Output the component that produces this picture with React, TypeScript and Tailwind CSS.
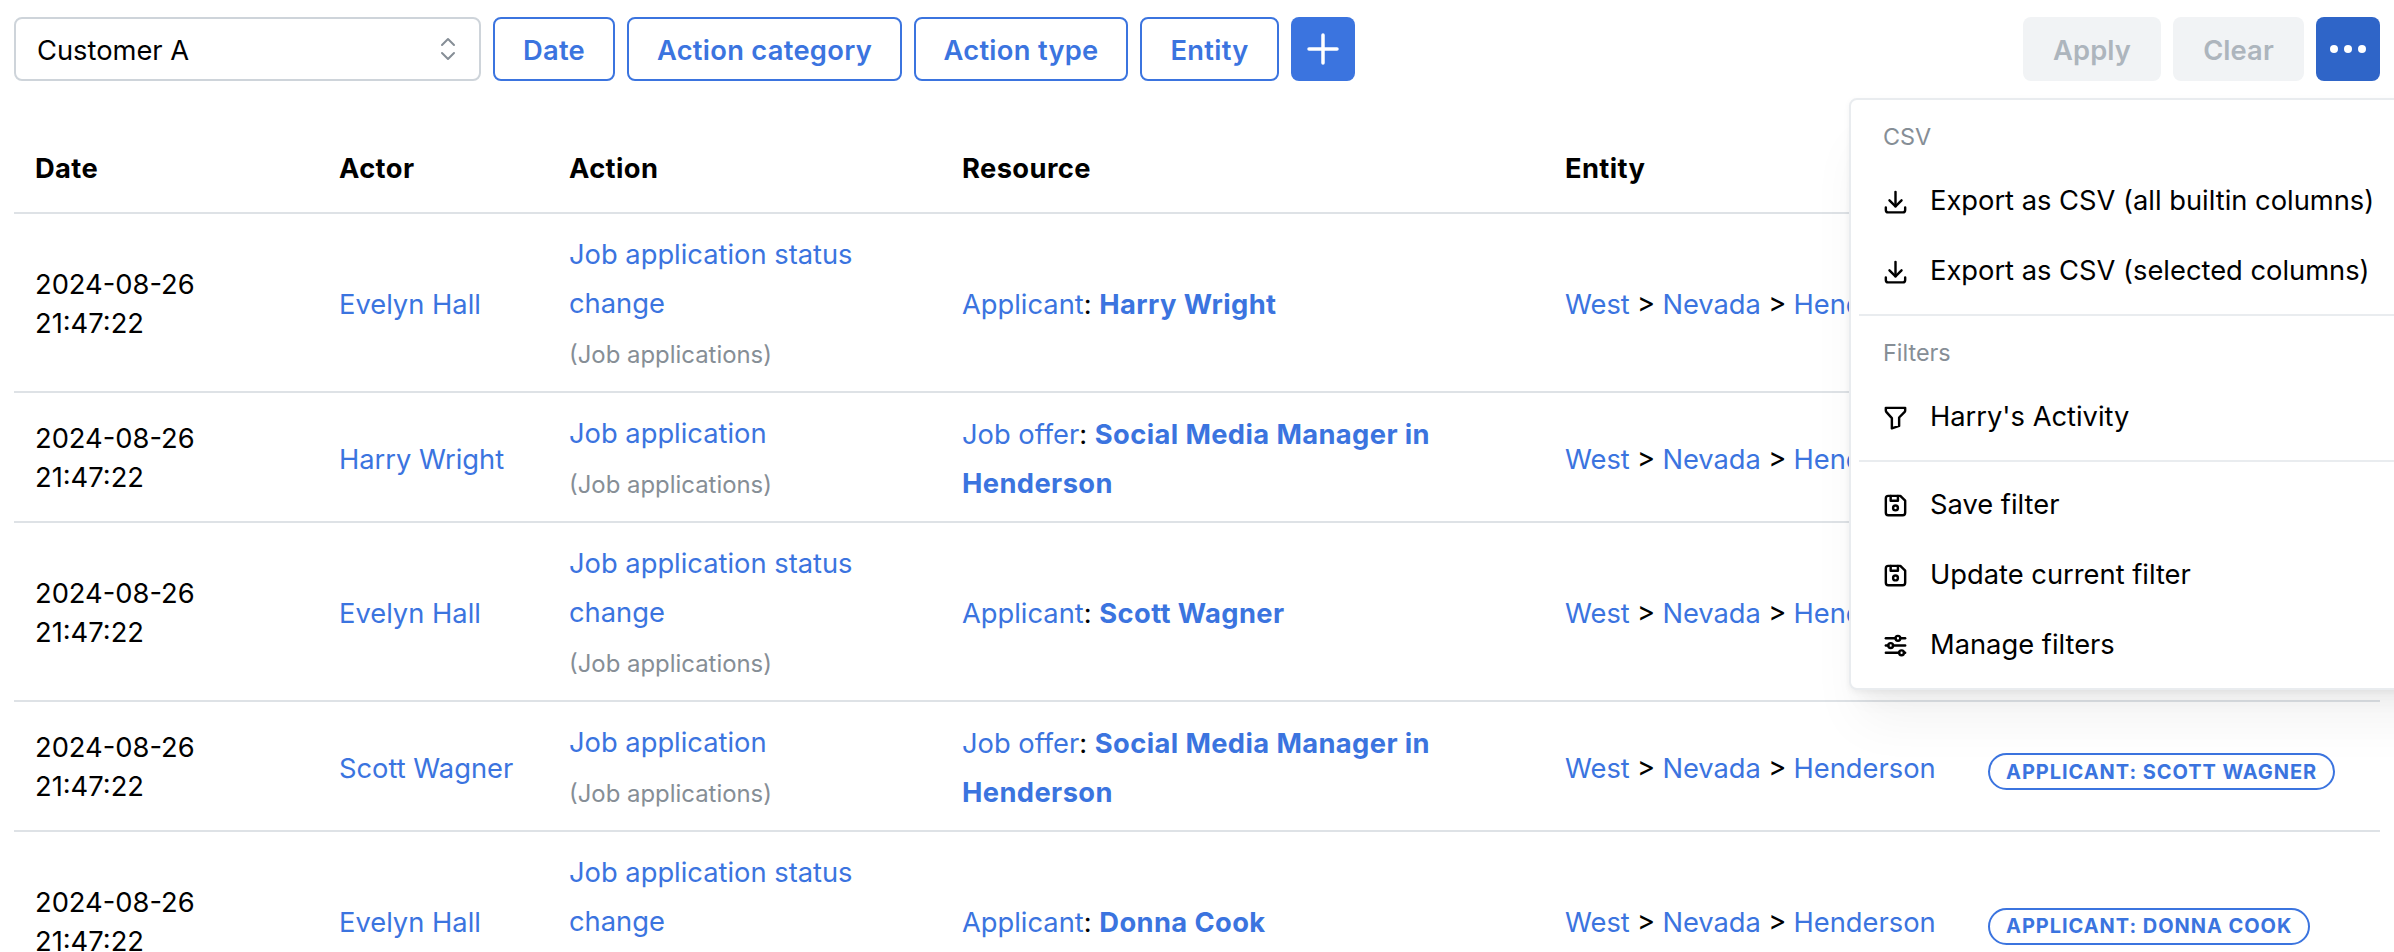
import React from 'react';

const F = ({ children, w }: { children: React.ReactNode; w: string }) => (
  <button className={`h-[64px] ${w} pt-[4px] rounded-[8px] border-2 border-[#3b74df] bg-white text-[#3b74df] font-semibold tracking-[0.3px] text-[27.3px] flex items-center justify-center shrink-0`}>{children}</button>
);

const Ic = ({ children }: { children: React.ReactNode }) => (
  <svg width="29" height="29" viewBox="0 0 24 24" fill="none" stroke="#000" strokeWidth="2" strokeLinecap="round" strokeLinejoin="round" className="shrink-0">{children}</svg>
);

const Download = () => <Ic><path d="M4 17v2a2 2 0 0 0 2 2h12a2 2 0 0 0 2 -2v-2" /><path d="M7 11l5 5l5 -5" /><path d="M12 4l0 12" /></Ic>;
const Filter = () => <Ic><path d="M4 4h16v2.172a2 2 0 0 1 -.586 1.414l-4.414 4.414v7l-6 2v-8.5l-4.48 -4.928a2 2 0 0 1 -.52 -1.345v-2.227z" /></Ic>;
const Floppy = () => <Ic><path d="M6 4h10l4 4v10a2 2 0 0 1 -2 2h-12a2 2 0 0 1 -2 -2v-12a2 2 0 0 1 2 -2" /><path d="M12 14m-2 0a2 2 0 1 0 4 0a2 2 0 1 0 -4 0" /><path d="M14 4l0 4l-6 0l0 -4" /></Ic>;
const Sliders = () => <Ic><path d="M14 6m-2 0a2 2 0 1 0 4 0a2 2 0 1 0 -4 0" /><path d="M4 6l8 0" /><path d="M16 6l4 0" /><path d="M8 12m-2 0a2 2 0 1 0 4 0a2 2 0 1 0 -4 0" /><path d="M4 12l2 0" /><path d="M10 12l10 0" /><path d="M17 18m-2 0a2 2 0 1 0 4 0a2 2 0 1 0 -4 0" /><path d="M4 18l11 0" /><path d="M19 18l1 0" /></Ic>;

const Item = ({ icon, children }: { icon: React.ReactNode; children: React.ReactNode }) => (
  <div className="h-[70px] pl-[22px] flex items-center gap-[20px] text-[27.3px] text-black whitespace-nowrap">{icon}<span>{children}</span></div>
);
const Label = ({ children }: { children: React.ReactNode }) => (
  <div className="h-[58px] pl-[24px] flex items-center text-[23.4px] text-[#868e96]">{children}</div>
);
const Divider = () => <div className="h-[2px] my-[8px] bg-[#e9ecef]" />;

type Row = { actor: string; action: string; res: string; name: string; tag: string };
const rows: Row[] = [
  { actor: 'Evelyn Hall', action: 'status', res: 'Applicant', name: 'Harry Wright', tag: 'Applicant: Harry Wright' },
  { actor: 'Harry Wright', action: 'app', res: 'Job offer', name: 'Social Media Manager in Henderson', tag: 'Applicant: Harry Wright' },
  { actor: 'Evelyn Hall', action: 'status', res: 'Applicant', name: 'Scott Wagner', tag: 'Applicant: Scott Wagner' },
  { actor: 'Scott Wagner', action: 'app', res: 'Job offer', name: 'Social Media Manager in Henderson', tag: 'Applicant: Scott Wagner' },
  { actor: 'Evelyn Hall', action: 'status', res: 'Applicant', name: 'Donna Cook', tag: 'Applicant: Donna Cook' },
];

const td = 'px-[21px] border-b-2 border-[#dee2e6] align-middle text-[27.3px] leading-[49px]';
const th = 'px-[21px] pt-[1px] h-[88px] border-b-2 border-[#dee2e6] text-left font-bold tracking-[0.4px] text-[27.3px] text-black';

export default function App() {
  return (
    <div className="relative w-[2394px] h-[952px] overflow-hidden bg-white font-['Inter',sans-serif] text-black">
      <div className="flex items-start pt-[17px] pl-[14px] pr-[14px]">
        <div className="w-[467px] h-[64px] pt-[4px] rounded-[8px] border-2 border-[#ced4da] flex items-center justify-between pl-[21px] pr-[23px] text-[27.3px] shrink-0">
          <span>Customer A</span>
          <svg width="16" height="24" viewBox="0 0 16 24" fill="none" stroke="#868e96" strokeWidth="2" strokeLinecap="round" strokeLinejoin="round" className="-mt-[4px]"><path d="M2 8l6 -6l6 6" /><path d="M2 16l6 6l6 -6" /></svg>
        </div>
        <div className="flex gap-[12px] ml-[12px]">
          <F w="w-[122px]">Date</F>
          <F w="w-[275px]">Action category</F>
          <F w="w-[214px]">Action type</F>
          <F w="w-[139px]">Entity</F>
          <button className="w-[64px] h-[64px] rounded-[8px] bg-[#3b74df] flex items-center justify-center shrink-0">
            <svg width="36" height="36" viewBox="0 0 36 36" fill="none" stroke="#fff" strokeWidth="3.5" strokeLinecap="round"><path d="M18 4v28" /><path d="M4 18h28" /></svg>
          </button>
        </div>
        <div className="ml-auto flex gap-[12px]">
          <button className="w-[138px] h-[64px] pt-[4px] rounded-[8px] bg-[#f1f3f5] text-[#adb5bd] font-semibold tracking-[0.1px] text-[27.3px]">Apply</button>
          <button className="w-[131px] h-[64px] pt-[4px] rounded-[8px] bg-[#f1f3f5] text-[#adb5bd] font-semibold tracking-[0.1px] text-[27.3px]">Clear</button>
          <button className="w-[64px] h-[64px] rounded-[8px] bg-[#2f65c8] flex items-center justify-center gap-[6px]">
            <span className="w-[8px] h-[8px] rounded-full bg-white" />
            <span className="w-[8px] h-[8px] rounded-full bg-white" />
            <span className="w-[8px] h-[8px] rounded-full bg-white" />
          </button>
        </div>
      </div>

      <div className="mt-[44px] mx-[14px]">
        <table className="w-[2366px] table-fixed border-collapse">
          <colgroup>
            <col className="w-[304px]" />
            <col className="w-[230px]" />
            <col className="w-[393px]" />
            <col className="w-[603px]" />
            <col className="w-[423px]" />
            <col className="w-[413px]" />
          </colgroup>
          <thead>
            <tr>
              <th className={th}>Date</th>
              <th className={th}>Actor</th>
              <th className={th}>Action</th>
              <th className={th}>Resource</th>
              <th className={th}>Entity</th>
              <th className={th}></th>
            </tr>
          </thead>
          <tbody>
            {rows.map((r, i) => (
              <tr key={i}>
                <td className={`${td} pt-[15px] pb-[13px]`}><div className="leading-[39px]">2024-08-26<br />21:47:22</div></td>
                <td className={`${td} pt-[16px] pb-[12px] text-[#3b74df]`}>{r.actor}</td>
                <td className={`${td} pt-[16px] pb-[12px]`}>
                  <div className="text-[#3b74df]">{r.action === 'status' ? 'Job application status change' : 'Job application'}</div>
                  <div className="mt-[2px] text-[23.9px] text-[#868e96]">(Job applications)</div>
                </td>
                <td className={`${td} pt-[16px] pb-[12px]`}>
                  <span className="text-[#3b74df]">{r.res}</span>: <span className="text-[#3b74df] font-bold tracking-[0.4px]">{r.name}</span>
                </td>
                <td className={`${td} pt-[16px] pb-[12px] whitespace-nowrap [word-spacing:-0.4px]`}>
                  <span className="text-[#3b74df]">West</span> &gt; <span className="text-[#3b74df]">Nevada</span> &gt; <span className="text-[#3b74df]">Henderson</span>
                </td>
                <td className={`${td} pt-[17px] pb-[11px]`}>
                  <span className="inline-flex items-center h-[37px] px-[16px] rounded-full border-2 border-[#3b74df] text-[#3b74df] font-bold uppercase text-[20px] tracking-[0.95px] leading-none whitespace-nowrap">{r.tag}</span>
                </td>
              </tr>
            ))}
          </tbody>
        </table>
      </div>

      <div className="absolute left-[1849px] top-[98px] w-[620px] bg-white border-2 border-[#e9ecef] rounded-[8px] p-[8px] shadow-[0_2px_6px_rgba(0,0,0,0.05),0_40px_50px_-10px_rgba(0,0,0,0.05),0_20px_20px_-10px_rgba(0,0,0,0.04)]">
        <Label>CSV</Label>
        <Item icon={<Download />}>Export as CSV (all builtin columns)</Item>
        <Item icon={<Download />}>Export as CSV (selected columns)</Item>
        <Divider />
        <Label>Filters</Label>
        <Item icon={<Filter />}>Harry's Activity</Item>
        <Divider />
        <Item icon={<Floppy />}>Save filter</Item>
        <Item icon={<Floppy />}>Update current filter</Item>
        <Item icon={<Sliders />}>Manage filters</Item>
      </div>
    </div>
  );
}
